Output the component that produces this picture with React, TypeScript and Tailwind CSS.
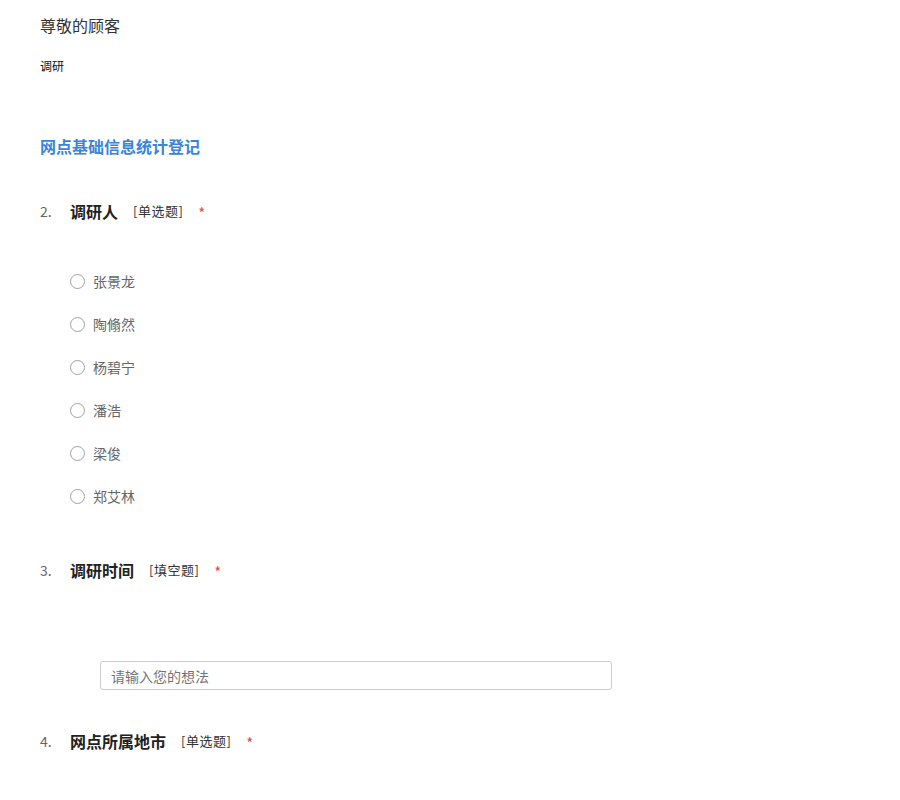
import React from "react";

const font = { fontFamily: '"Noto Sans CJK SC", "Noto Sans", sans-serif' };

function QHeader({ num, title, type }: { num: string; title: string; type: string }) {
  return (
    <div className="flex items-center h-[24px]">
      <span className="w-[30px] text-[14px] text-[#666]">{num}</span>
      <span className="text-[16px] font-bold text-[#222]">{title}</span>
      <span className="ml-[15px] text-[13px] tracking-[0.5px] text-[#333]">{type}</span>
      <span className="ml-[15px] text-[15px] leading-[24px] pt-[3px] text-[#e74c3c]">*</span>
    </div>
  );
}

export default function App() {
  const opts = ["张景龙", "陶翛然", "杨碧宁", "潘浩", "梁俊", "郑艾林"];
  return (
    <div className="bg-white w-[900px] h-[800px] overflow-hidden pl-[40px] pt-[13px]" style={font}>
      <div className="text-[16px] leading-[24px] text-[#333]">尊敬的顾客</div>
      <div className="mt-[20px] text-[12px] leading-[18px] text-[#111]">调研</div>
      <div className="mt-[59px] text-[16px] leading-[24px] font-bold text-[#3a84dc]">网点基础信息统计登记</div>
      <div className="mt-[41px]">
        <QHeader num="2." title="调研人" type="[单选题]" />
      </div>
      <div className="mt-[37px] pl-[30px]">
        {opts.map((o) => (
          <div key={o} className="flex items-center h-[43px]">
            <span className="w-[15px] h-[15px] rounded-full border border-[#a0a0a0] bg-white" />
            <span className="ml-[8px] text-[14px] text-[#666]">{o}</span>
          </div>
        ))}
      </div>
      <div className="mt-[40px]">
        <QHeader num="3." title="调研时间" type="[填空题]" />
      </div>
      <div className="mt-[79px] pl-[60px]">
        <input
          className="w-[512px] h-[29px] border border-[#cccccc] rounded-[3px] px-[10px] text-[14px] text-[#333] placeholder:text-[#757575] outline-none"
          placeholder="请输入您的想法"
          style={font}
        />
      </div>
      <div className="mt-[39px]">
        <QHeader num="4." title="网点所属地市" type="[单选题]" />
      </div>
    </div>
  );
}
